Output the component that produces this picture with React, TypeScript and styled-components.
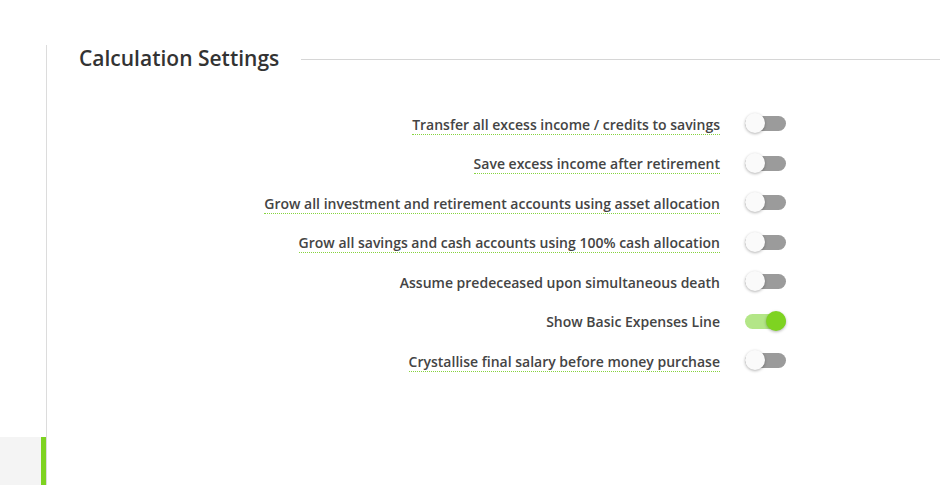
import React, { useState } from "react";
import styled, { createGlobalStyle, css } from "styled-components";

const GlobalStyle = createGlobalStyle`
  html, body {
    margin: 0;
    padding: 0;
    background: #fff;
    font-family: "Open Sans", "Liberation Sans", sans-serif;
  }
`;

const Page = styled.div`
  display: flex;
  height: 485px;
  overflow: hidden;
`;

const Sidebar = styled.aside`
  width: 46px;
  flex-shrink: 0;
  margin-top: 45px;
  padding-top: 392px;
  border-right: 1px solid #dcdcdc;
  box-sizing: content-box;
`;

const NavItem = styled.div<{ $active?: boolean }>`
  height: 60px;
  background: #f4f4f4;
  ${(p) =>
    p.$active &&
    css`
      border-right: 5px solid #7ed321;
    `}
`;

const Main = styled.main`
  flex: 1;
  padding: 42px 0 0 32px;
`;

const Header = styled.div`
  display: flex;
  align-items: center;
  gap: 22px;
`;

const Title = styled.h2`
  margin: 0;
  font-size: 21px;
  font-weight: 600;
  color: #333;
  line-height: 32px;
`;

const Rule = styled.div`
  flex: 1;
  height: 1px;
  background: #d6d6d6;
  margin-top: 2px;
`;

const List = styled.div`
  display: flex;
  flex-direction: column;
  width: 707px;
  margin-top: 30px;
`;

const Row = styled.div`
  display: flex;
  justify-content: flex-end;
  align-items: center;
  gap: 25px;
  height: 39.5px;
`;

const Label = styled.span<{ $hint?: boolean }>`
  font-size: 14px;
  font-weight: 600;
  color: #444;
  line-height: 19px;
  padding-bottom: 0;
  border-bottom: 1px dotted ${(p) => (p.$hint ? "#86d43f" : "transparent")};
  margin-top: 2px;
`;

const Track = styled.button<{ $on: boolean }>`
  position: relative;
  width: 41px;
  height: 15px;
  border: 0;
  padding: 0;
  border-radius: 8px;
  cursor: pointer;
  background: ${(p) => (p.$on ? "#b3e687" : "#9b9b9b")};
`;

const Thumb = styled.span<{ $on: boolean }>`
  position: absolute;
  top: -3px;
  left: ${(p) => (p.$on ? "21px" : "0")};
  width: 20px;
  height: 20px;
  border-radius: 50%;
  background: ${(p) => (p.$on ? "#7ed321" : "#fafafa")};
  box-shadow: 0 1px 3px rgba(0, 0, 0, 0.3);
`;

const settings = [
  { label: "Transfer all excess income / credits to savings", hint: true, on: false },
  { label: "Save excess income after retirement", hint: true, on: false },
  { label: "Grow all investment and retirement accounts using asset allocation", hint: true, on: false },
  { label: "Grow all savings and cash accounts using 100% cash allocation", hint: true, on: false },
  { label: "Assume predeceased upon simultaneous death", hint: false, on: false },
  { label: "Show Basic Expenses Line", hint: false, on: true },
  { label: "Crystallise final salary before money purchase", hint: true, on: false },
];

function Toggle({ on, onClick }: { on: boolean; onClick: () => void }) {
  return (
    <Track $on={on} onClick={onClick} aria-pressed={on}>
      <Thumb $on={on} />
    </Track>
  );
}

export default function App() {
  const [values, setValues] = useState(settings.map((s) => s.on));

  const flip = (i: number) =>
    setValues((v) => v.map((x, j) => (j === i ? !x : x)));

  return (
    <>
      <GlobalStyle />
      <Page>
        <Sidebar>
          <NavItem $active />
        </Sidebar>
        <Main>
          <Header>
            <Title>Calculation Settings</Title>
            <Rule />
          </Header>
          <List>
            {settings.map((s, i) => (
              <Row key={s.label}>
                <Label $hint={s.hint}>{s.label}</Label>
                <Toggle on={values[i]} onClick={() => flip(i)} />
              </Row>
            ))}
          </List>
        </Main>
      </Page>
    </>
  );
}
